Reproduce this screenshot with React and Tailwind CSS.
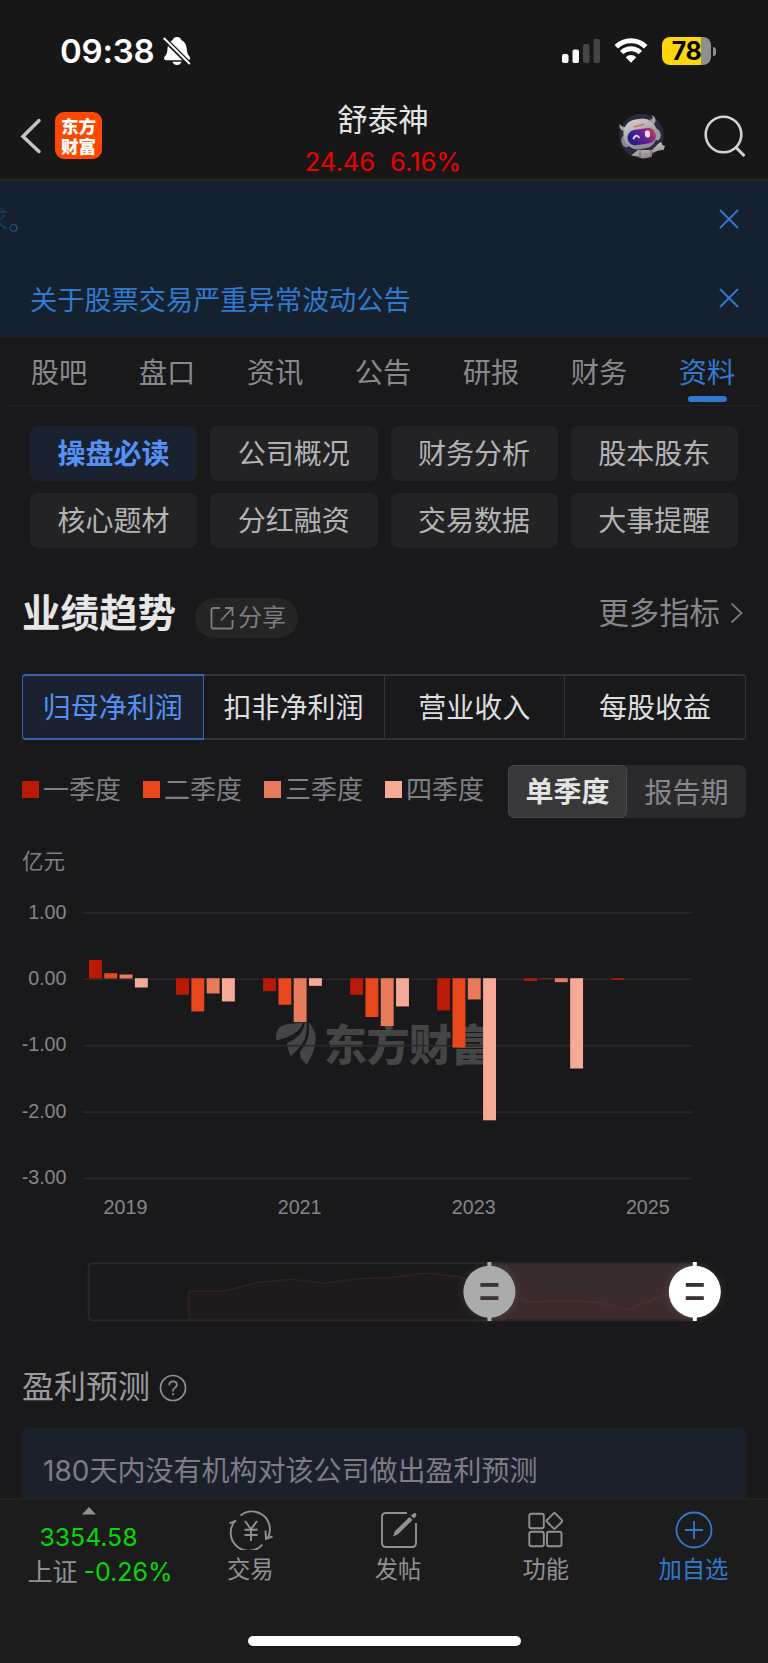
import { useState } from 'react';
import clsx from 'clsx';

const TABS = ['股吧', '盘口', '资讯', '公告', '研报', '财务', '资料'];

const SECTIONS = [
  '操盘必读',
  '公司概况',
  '财务分析',
  '股本股东',
  '核心题材',
  '分红融资',
  '交易数据',
  '大事提醒',
];

const METRICS = ['归母净利润', '扣非净利润', '营业收入', '每股收益'];

const QUARTERS = [
  { label: '一季度', color: '#b91a06', swatch: 'bg-[#b91a06]' },
  { label: '二季度', color: '#e8461c', swatch: 'bg-[#e8461c]' },
  { label: '三季度', color: '#e87b5c', swatch: 'bg-[#e87b5c]' },
  { label: '四季度', color: '#f6a997', swatch: 'bg-[#f6a997]' },
];

// net profit per quarter, in 亿元
const PROFIT = [
  { year: 2019, values: [0.28, 0.08, 0.06, -0.14] },
  { year: 2020, values: [-0.25, -0.5, -0.23, -0.35] },
  { year: 2021, values: [-0.195, -0.4, -0.66, -0.115] },
  { year: 2022, values: [-0.25, -0.585, -0.72, -0.425] },
  { year: 2023, values: [-0.485, -1.045, -0.32, -2.14] },
  { year: 2024, values: [-0.04, -0.005, -0.06, -1.36] },
  { year: 2025, values: [-0.025] },
];

const TICKS = [1, 0, -1, -2, -3];

function StatusBar() {
  return (
    <div className="flex h-[102px] items-center pl-[60px] pr-[52px]">
      <span className="text-[33px] font-semibold leading-none tracking-[-0.2px] text-white">09:38</span>
      <svg className="ml-[8px] h-[30px] w-[28px]" viewBox="0 0 28 30" fill="none">
        <path
          d="M14 1c2.300 0 3.800 1.200 4.300 3 3.500 1.600 5.200 4.800 5.400 8.600.2 4 1 5.800 2.800 8 1.300 1.700.5 3.600-1.500 3.600H3c-2 0-2.600-2-1.300-3.600 2-2.200 2.600-4 2.800-8 .2-3.800 1.700-7 5.200-8.600.5-1.800 2-3 4.300-3z"
          fill="#fff"
        />
        <path d="M9.500 25.800h9c-.6 2-2.300 3.300-4.500 3.300s-3.900-1.300-4.500-3.300z" fill="#fff" />
        <path d="M0 1.500 27 28.500" stroke="#171717" strokeWidth="5" />
        <path d="M1.300 2.500 26.300 27.500" stroke="#fff" strokeWidth="1.900" strokeLinecap="round" />
      </svg>

      <div className="ml-auto flex items-center">
        <svg className="h-[26px] w-[40px]" viewBox="0 0 40 26">
          <rect x="1" y="16" width="6.500" height="9" rx="2" fill="#fff" />
          <rect x="11.500" y="11.500" width="6.500" height="13.500" rx="2" fill="#fff" />
          <rect x="22" y="6" width="6.500" height="19" rx="2" fill="#464646" />
          <rect x="32.500" y="1" width="6.500" height="24" rx="2" fill="#464646" />
        </svg>
        <svg className="ml-[13px] h-[26px] w-[34px]" viewBox="0 0 34 26" fill="none">
          <path d="M2.300 8.800a21 21 0 0 1 29.400 0" stroke="#fff" strokeWidth="5" />
          <path d="M7.700 14.600a13.200 13.200 0 0 1 18.600 0" stroke="#fff" strokeWidth="4.800" />
          <path d="M11.800 19.200a7.400 7.400 0 0 1 10.400 0L17 24.700z" fill="#fff" />
        </svg>
        <div className="ml-[14px] flex h-[28px] w-[49px] items-center justify-center rounded-[8px] bg-[linear-gradient(to_right,#ffd60a_79%,#8f8f8f_79%)]">
          <span className="text-[25px] font-bold leading-none tracking-[-0.5px] text-black">78</span>
        </div>
        <div className="ml-[2px] h-[9px] w-[3px] rounded-r-full bg-[#8f8f8f]" />
      </div>
    </div>
  );
}

function Robot() {
  return (
    <svg className="h-[46px] w-[48px]" viewBox="0 0 48 46">
      <defs>
        <linearGradient id="visor" x1="0" y1="0.3" x2="1" y2="0">
          <stop offset="0" stopColor="#24208a" />
          <stop offset="0.5" stopColor="#6a1f92" />
          <stop offset="1" stopColor="#c8475c" />
        </linearGradient>
        <linearGradient id="shell" x1="0" y1="0" x2="0.3" y2="1">
          <stop offset="0" stopColor="#d6d0cf" />
          <stop offset="1" stopColor="#918b91" />
        </linearGradient>
      </defs>
      <circle cx="23.500" cy="23" r="22.200" fill="#272c3e" />
      <path d="M13 42.500 20 37h14l6-6 3-2 1.500 3 2.500 1-1.500 4-5 .5-6.500 2.500v3.500q-10.500 4-14 0z" fill="url(#shell)" />
      <path d="M22 37.500v7M33 37v6.500" stroke="#6d666c" strokeWidth="1" />
      <path d="M6 18C1.500 17 .8 13.500 2 10.500c1 3 3 4.500 7 3z" fill="#a9a3a6" />
      <path d="M31 6.500C35 7 35.500 5 33.500 2c4 1.500 5 5 3 9z" fill="#a9a3a6" />
      <ellipse cx="7.500" cy="28.500" rx="4" ry="6" fill="#8d868d" transform="rotate(-14 7.500 28.500)" />
      <ellipse cx="38.500" cy="21.500" rx="4" ry="6" fill="#a39b9f" transform="rotate(-14 38.500 21.500)" />
      <rect x="5.500" y="6" width="33.500" height="30" rx="14" fill="url(#shell)" transform="rotate(-9 22 21)" />
      <path d="M15 13.500 25.500 10.500l1.500 1.200-10 2.800z" fill="#bf7a45" />
      <rect x="9.500" y="16" width="28.500" height="15.500" rx="7.700" fill="url(#visor)" transform="rotate(-9 23 24)" />
      <path d="M15.500 25.500q2.500-5 5.500-1" stroke="#e4dbf2" strokeWidth="1.800" fill="none" strokeLinecap="round" />
      <rect x="27" y="17.500" width="5" height="7" rx="2.200" fill="#f0dce6" transform="rotate(-6 29 21)" />
    </svg>
  );
}

function NavBar() {
  return (
    <div className="grid h-[67px] grid-cols-[1fr_auto_1fr] items-center pl-[20px] pr-[22px]">
      <div className="flex items-center">
        <svg className="h-[36px] w-[22px]" viewBox="0 0 22 36" fill="none">
          <path d="M19 2.500 3 18.500l16 15" stroke="#c3c3c3" strokeWidth="3.500" strokeLinecap="round" />
        </svg>
        <div className="ml-[13px] flex h-[47px] w-[47px] flex-col items-center justify-center rounded-[9px] bg-[#fe4800] font-['Noto_Sans_CJK_SC'] text-[17.500px] font-black leading-[20px] text-white">
          <span>东方</span>
          <span>财富</span>
        </div>
      </div>
      <div className="-my-[14px] flex flex-col items-center pt-[10px]">
        <h1 className="text-[30.500px] leading-[42px] text-[#e4e4e4]">舒泰神</h1>
        <div className="flex gap-[15px] text-[25.500px] leading-[42px] text-[#ec0000]">
          <span>24.46</span>
          <span>6.16%</span>
        </div>
      </div>
      <div className="flex items-center justify-end">
        <Robot />
        <svg className="ml-[38px] h-[42px] w-[42px]" viewBox="0 0 42 42" fill="none">
          <circle cx="19.500" cy="19.500" r="17.800" stroke="#d2d2d2" strokeWidth="2.600" />
          <path d="M32 32.500 40.500 41" stroke="#d2d2d2" strokeWidth="3" />
        </svg>
      </div>
    </div>
  );
}

function CloseIcon() {
  return (
    <svg className="h-[20px] w-[20px]" viewBox="0 0 20 20" fill="none">
      <path d="M1 1 19 19M19 1 1 19" stroke="#3079ce" strokeWidth="1.800" />
    </svg>
  );
}

function Notices() {
  return (
    <div className="h-[156px] bg-[#15212f] pr-[29px] text-[27.200px] leading-[40px]">
      <div className="flex h-[76px] items-center justify-between">
        <span className="-ml-[19px] pt-[4px] text-[#21558c] [mask-image:linear-gradient(to_right,transparent_20%,black_70%)]">求。</span>
        <CloseIcon />
      </div>
      <div className="flex h-[81px] items-center justify-between pl-[30px]">
        <span className="pt-[6px] text-[#3079ce]">关于股票交易严重异常波动公告</span>
        <CloseIcon />
      </div>
    </div>
  );
}

function ShareIcon() {
  return (
    <svg className="h-[24px] w-[24px]" viewBox="0 0 24 24" fill="none" stroke="#7d7d82" strokeWidth="1.800">
      <path d="M10 2H3.500Q1.500 2 1.500 4v16.500q0 2 2 2h17q2 0 2-2V14" />
      <path d="M15 2h7.500v8M22 2.500 11 14.500" />
    </svg>
  );
}

function ProfitChart() {
  const zero = 118.5;
  const unit = 66.4;

  return (
    <svg className="block h-[360px] w-[768px]" viewBox="0 0 768 360">
      <g fill="#454548">
        <path d="M276 180.500c0-11 2-15 13-16.500q10-1 14-1.800-2 8-12 13c-6 3-10 4-15 5.300z" />
        <path d="M287 183c10-4 17-11 17.500-20l2-1c1 11-1 20-9 27.500l-7 7q-3-7-3.500-13.500z" />
        <path d="M308.500 162c9 10 11 22-2 43-6-7-9-11-4-17 6-7 7.500-15 6-26z" />
        <text
          x="324"
          y="182"
          fontSize="43"
          fontWeight="900"
          letterSpacing="-0.5"
          dominantBaseline="central"
          className="font-['Noto_Sans_CJK_SC']"
        >
          东方财富
        </text>
      </g>

      {TICKS.map((tick) => (
        <g key={tick}>
          <rect x="82.700" y={zero - tick * unit} width="609.500" height="1.600" fill="#29292b" />
          <text
            x="66.500"
            y={zero - tick * unit + 6.5}
            textAnchor="end"
            fontSize="19.700"
            fill="#85858b"
            className="font-['Liberation_Sans']"
          >
            {tick.toFixed(2)}
          </text>
        </g>
      ))}

      {PROFIT.map(({ year, values }, i) => (
        <g key={year}>
          {values.map((value, q) => (
            <rect
              key={q}
              x={89 + i * 87.05 + q * 15.3}
              y={value > 0 ? zero - value * unit : zero - 0.3}
              width="12.900"
              height={Math.abs(value) * unit}
              fill={QUARTERS[q].color}
            />
          ))}
          {year % 2 === 1 && (
            <text
              x={125.5 + i * 87.05}
              y="353.500"
              textAnchor="middle"
              fontSize="19.700"
              fill="#85858b"
              className="font-['Liberation_Sans']"
            >
              {year}
            </text>
          )}
        </g>
      ))}
    </svg>
  );
}

function Handle({ x, color }) {
  return (
    <g>
      <rect x={x - 2} y="2" width="4" height="59" fill={color} />
      <circle cx={x} cy="31.700" r="26" fill={color} className="drop-shadow-[0_0_5px_rgba(255,255,255,0.12)]" />
      <rect x={x - 9} y="23" width="18" height="3.800" fill="#3b3330" />
      <rect x={x - 9} y="36.200" width="18" height="3.800" fill="#3b3330" />
    </g>
  );
}

function RangeSlider() {
  const line =
    '189,31 225,31 258.500,22.500 291,19.300 324.500,23.300 358,18.700 392,17.300 425,13 459,16.700 493,28 527,42 563,40.700 596,42 629,49.700 663,35.300 695,35';

  return (
    <svg className="block h-[64px] w-[768px]" viewBox="0 0 768 64">
      <path d="M695 3.300H93q-4.500 0-4.500 4.500v48q0 4.500 4.500 4.500H695" fill="none" stroke="#29292b" strokeWidth="1.800" />
      <rect x="489.500" y="4" width="205.500" height="55.500" fill="#392c2c" />
      <polygon points={`189,60 ${line} 695,60`} fill="#8a3030" fillOpacity="0.05" />
      <polyline points={`189,60 ${line}`} fill="none" stroke="#a0563f" strokeOpacity="0.15" strokeWidth="1.500" />
      <Handle x={489.4} color="#ababab" />
      <Handle x={694.8} color="#ffffff" />
    </svg>
  );
}

function TradeIcon() {
  return (
    <svg className="h-[40px] w-[46px]" viewBox="0 0 46 40" fill="none" stroke="#919195" strokeWidth="1.900">
      <path d="M12.500 5.500A18 18 0 0 1 40 27.500M1.500 13.300l6.800-2.600" />
      <path d="M34.500 34.500A18 18 0 0 1 7 11" />
      <path d="M37.500 20.500 38 29l6.500-2.500" />
      <path d="m17 11 6 8.300 6-8.300M23 19.300V31M16.500 19.800h13M16.500 25h13" />
    </svg>
  );
}

function PostIcon() {
  return (
    <svg className="h-[40px] w-[40px]" viewBox="0 0 40 40" fill="none" stroke="#919195" strokeWidth="1.900">
      <path d="M28 3H7Q3 3 3 7v26q0 4 4 4h26q4 0 4-4V13" />
      <path d="M14 26.500 16 21 30.500 7l3 3L19 24.300z" fill="#919195" stroke="none" />
      <path d="m32 5.800 2.300-2.300q1.500-1 2.600 0t.2 2.700L34.800 8.500z" fill="#919195" stroke="none" />
    </svg>
  );
}

function FeatureIcon() {
  return (
    <svg className="h-[40px] w-[40px]" viewBox="0 0 40 40" fill="none" stroke="#919195" strokeWidth="1.900">
      <rect x="3.300" y="3.800" width="14.500" height="14.500" rx="2" />
      <rect x="3.300" y="21.800" width="14.500" height="14.500" rx="2" />
      <rect x="21" y="21.800" width="14.500" height="14.500" rx="2" />
      <rect x="22.500" y="5" width="11.800" height="11.800" rx="1.500" transform="rotate(45 28.400 10.900)" />
    </svg>
  );
}

function AddIcon() {
  return (
    <svg className="h-[40px] w-[40px]" viewBox="0 0 40 40" fill="none" stroke="#3079ce" strokeWidth="1.800">
      <circle cx="20" cy="20" r="17.500" />
      <path d="M20 11v18M11 20h18" />
    </svg>
  );
}

const ACTIONS = [
  { label: '交易', Icon: TradeIcon },
  { label: '发帖', Icon: PostIcon },
  { label: '功能', Icon: FeatureIcon },
  { label: '加自选', Icon: AddIcon, highlight: true },
];

function BottomBar() {
  return (
    <footer className="flex h-[165px] flex-col border-t-2 border-[#232325] bg-[#1c1c1c]">
      <div className="flex h-[136px]">
        <div className="flex w-[177px] flex-col items-center pt-[7px]">
          <svg className="h-[8px] w-[14px]" viewBox="0 0 14 8">
            <path d="M7 0 14 7.500H0z" fill="#919195" />
          </svg>
          <span className="mt-[5px] text-[24.800px] leading-[34px] text-[#05d805]">3354.58</span>
          <div className="flex items-center gap-[6px] pl-[23px] text-[25px] leading-[36px]">
            <span className="text-[#919195]">上证</span>
            <span className="text-[#05d805]">-0.26%</span>
          </div>
        </div>
        {ACTIONS.map(({ label, Icon, highlight }) => (
          <button key={label} className="flex w-[147.700px] flex-col items-center pt-[10px]">
            <Icon />
            <span
              className={clsx(
                '-ml-px text-[23.300px] leading-[40px]',
                highlight ? 'text-[#3079ce]' : 'text-[#919195]'
              )}
            >
              {label}
            </span>
          </button>
        ))}
      </div>
      <div className="mx-auto h-[10px] w-[273px] rounded-full bg-white" />
    </footer>
  );
}

export default function App() {
  const [tab, setTab] = useState('资料');
  const [section, setSection] = useState('操盘必读');
  const [metric, setMetric] = useState('归母净利润');
  const [period, setPeriod] = useState('单季度');

  return (
    <div className="flex h-[1663px] w-[768px] flex-col overflow-hidden bg-[#19191b] font-['Inter','Noto_Sans_CJK_SC',sans-serif]">
      <header className="h-[181px] shrink-0 border-b-2 border-[#262626] bg-[#171717]">
        <StatusBar />
        <NavBar />
      </header>

      <Notices />

      <nav className="ml-[5px] mr-[6px] flex h-[69px] shrink-0 border-b border-[#242426]">
        {TABS.map((name) => (
          <button
            key={name}
            onClick={() => setTab(name)}
            className={clsx(
              'flex w-[108px] flex-col items-center pt-[16px] text-[28.300px] leading-[40px]',
              tab === name ? 'text-[#3079ce]' : 'text-[#88888d]'
            )}
          >
            {name}
            {tab === name && <span className="mt-[3px] h-[6px] w-[39px] rounded-full bg-[#3079ce]" />}
          </button>
        ))}
      </nav>

      <div className="mt-[20px] grid shrink-0 grid-cols-4 gap-x-[13px] gap-y-[12px] px-[30px]">
        {SECTIONS.map((name) => (
          <button
            key={name}
            onClick={() => setSection(name)}
            className={clsx(
              'h-[55px] rounded-[8px] text-[28px] leading-[57px]',
              section === name
                ? 'bg-[#1a212f] font-bold text-[#5591f5]'
                : 'bg-[#232325] text-[#b3b3b5]'
            )}
          >
            {name}
          </button>
        ))}
      </div>

      <div className="mt-[39px] flex h-[52px] shrink-0 items-center pl-[22px] pr-[25px]">
        <h2 className="text-[38.500px] font-bold leading-[48px] text-[#e6e6e6]">业绩趋势</h2>
        <button className="ml-[19px] mt-[10px] flex h-[40px] w-[103px] items-center gap-[4px] rounded-full bg-[#252525] pl-[15px] text-[24px] leading-[40px] text-[#7d7d82]">
          <ShareIcon />
          分享
        </button>
        <a className="ml-auto flex items-center text-[30.400px] leading-[50px] text-[#86868b]">
          更多指标
          <svg className="ml-[10px] h-[22px] w-[13px]" viewBox="0 0 13 22" fill="none">
            <path d="M1.500 1.500 11.500 11l-10 9.500" stroke="#77777c" strokeWidth="1.800" />
          </svg>
        </a>
      </div>

      <div className="mx-[22px] mt-[35px] flex h-[66px] shrink-0">
        {METRICS.map((name, i) => (
          <button
            key={name}
            onClick={() => setMetric(name)}
            className={clsx(
              'flex-1 border-y-2 border-r text-[28px] leading-[65px]',
              i === 0 && 'rounded-l-[4px] border-l',
              i === METRICS.length - 1 && 'rounded-r-[4px]',
              metric === name
                ? 'border-[#3565ae] bg-[#1b212f] text-[#5591f5]'
                : 'border-[#343437] text-[#dededf]'
            )}
          >
            {name}
          </button>
        ))}
      </div>

      <div className="mx-[22px] mt-[25px] flex h-[53px] shrink-0 items-center">
        {QUARTERS.map(({ label, swatch }) => (
          <div
            key={label}
            className="mb-[4px] flex w-[121px] items-center text-[26px] leading-[40px] text-[#7f7f85]"
          >
            <span className={clsx('mr-[4px] h-[17px] w-[17px] shrink-0', swatch)} />
            <span className="whitespace-nowrap">{label}</span>
          </div>
        ))}
        <div className="ml-auto flex h-[53px] w-[238px] rounded-[7px] bg-[#2a2a2c] text-[28px]">
          {['单季度', '报告期'].map((name) => (
            <button
              key={name}
              onClick={() => setPeriod(name)}
              className={clsx(
                'w-[119px] rounded-[6px]',
                period === name
                  ? 'border border-[#48484a] bg-[#38383a] font-bold leading-[48px] text-[#e4e4e4]'
                  : 'leading-[56px] text-[#88888d]'
              )}
            >
              {name}
            </button>
          ))}
        </div>
      </div>

      <div className="h-[42px] shrink-0 pl-[22px] pt-[25px] text-[21.500px] leading-[36px] text-[#7f7f85]">亿元</div>

      <ProfitChart />

      <div className="mt-[40px] shrink-0">
        <RangeSlider />
      </div>

      <div className="mt-[40px] flex h-[46px] shrink-0 items-center pl-[22px] text-[32px] leading-[46px] text-[#9b9b9f]">
        盈利预测
        <svg className="ml-[9px] mt-[2px] h-[28px] w-[28px]" viewBox="0 0 28 28" fill="none" stroke="#8f8f94" strokeWidth="1.700">
          <circle cx="14" cy="14" r="12.500" />
          <path d="M10.200 11.200q.2-3.800 3.800-3.800t3.800 3.300q0 1.800-2 3.200-1.800 1.200-1.800 2.900v.7" />
          <path d="M14 19.300v2" />
        </svg>
      </div>

      <div className="mx-[22px] mt-[18px] flex-1 overflow-hidden rounded-t-[7px] bg-[#1b212b] pl-[21px] pt-[23px] text-[28px] leading-[40px] text-[#7e7c88]">
        180天内没有机构对该公司做出盈利预测
      </div>

      <BottomBar />
    </div>
  );
}
